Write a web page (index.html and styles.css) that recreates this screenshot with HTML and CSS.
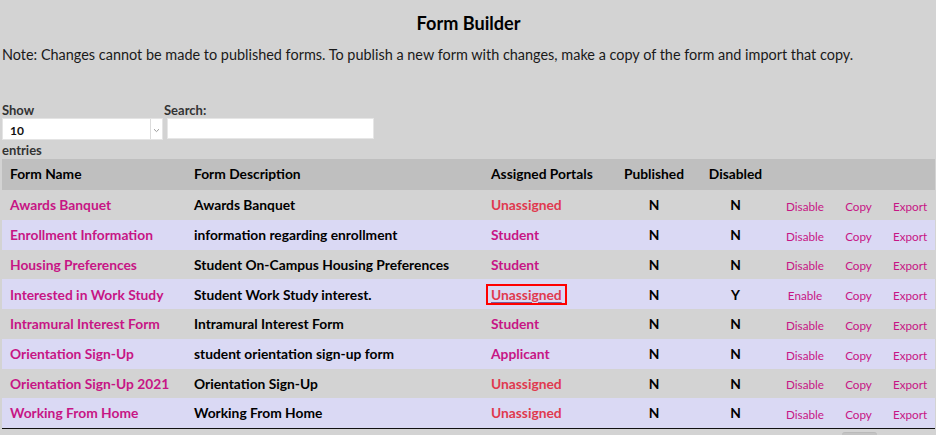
FILE: index.html
```html
<!DOCTYPE html>
<html lang="en">
<head>
<meta charset="utf-8">
<title>Form Builder</title>
<link rel="stylesheet" href="styles.css">
</head>
<body>
<h1 class="title">Form Builder</h1>
<p class="note">Note: Changes cannot be made to published forms. To publish a new form with changes, make a copy of the form and import that copy.</p>

<div class="controls">
  <div class="length">
    <label class="lbl">Show</label>
    <div class="select">
      <span class="select-val">10</span>
      <span class="select-arrow">
        <svg width="7" height="5" viewBox="0 0 7 5"><path d="M1 1.2 L3.5 3.6 L6 1.2" fill="none" stroke="#9a9a9a" stroke-width="1"/></svg>
      </span>
    </div>
    <div class="lbl entries">entries</div>
  </div>
  <div class="filter">
    <label class="lbl">Search:</label>
    <div class="search"></div>
  </div>
</div>

<table class="grid">
  <colgroup>
    <col class="c-name"><col class="c-desc"><col class="c-portal"><col class="c-pub"><col class="c-dis"><col class="c-act1"><col class="c-act2"><col class="c-act3">
  </colgroup>
  <thead>
    <tr>
      <th>Form Name</th><th>Form Description</th><th>Assigned Portals</th><th class="ctr">Published</th><th class="ctr">Disabled</th><th></th><th></th><th></th>
    </tr>
  </thead>
  <tbody>
    <tr>
      <td><a class="lnk">Awards Banquet</a></td><td>Awards Banquet</td><td><a class="un">Unassigned</a></td><td class="ctr">N</td><td class="ctr">N</td><td class="act"><a>Disable</a></td><td class="act"><a>Copy</a></td><td class="act"><a>Export</a></td>
    </tr>
    <tr>
      <td><a class="lnk">Enrollment Information</a></td><td>information regarding enrollment</td><td><a class="lnk">Student</a></td><td class="ctr">N</td><td class="ctr">N</td><td class="act"><a>Disable</a></td><td class="act"><a>Copy</a></td><td class="act"><a>Export</a></td>
    </tr>
    <tr>
      <td><a class="lnk">Housing Preferences</a></td><td>Student On-Campus Housing Preferences</td><td><a class="lnk">Student</a></td><td class="ctr">N</td><td class="ctr">N</td><td class="act"><a>Disable</a></td><td class="act"><a>Copy</a></td><td class="act"><a>Export</a></td>
    </tr>
    <tr>
      <td><a class="lnk">Interested in Work Study</a></td><td>Student Work Study interest.</td><td><a class="un focus">Unassigned</a></td><td class="ctr">N</td><td class="ctr">Y</td><td class="act"><a>Enable</a></td><td class="act"><a>Copy</a></td><td class="act"><a>Export</a></td>
    </tr>
    <tr>
      <td><a class="lnk">Intramural Interest Form</a></td><td>Intramural Interest Form</td><td><a class="lnk">Student</a></td><td class="ctr">N</td><td class="ctr">N</td><td class="act"><a>Disable</a></td><td class="act"><a>Copy</a></td><td class="act"><a>Export</a></td>
    </tr>
    <tr>
      <td><a class="lnk">Orientation Sign-Up</a></td><td>student orientation sign-up form</td><td><a class="lnk">Applicant</a></td><td class="ctr">N</td><td class="ctr">N</td><td class="act"><a>Disable</a></td><td class="act"><a>Copy</a></td><td class="act"><a>Export</a></td>
    </tr>
    <tr>
      <td><a class="lnk">Orientation Sign-Up 2021</a></td><td>Orientation Sign-Up</td><td><a class="un">Unassigned</a></td><td class="ctr">N</td><td class="ctr">N</td><td class="act"><a>Disable</a></td><td class="act"><a>Copy</a></td><td class="act"><a>Export</a></td>
    </tr>
    <tr>
      <td><a class="lnk">Working From Home</a></td><td>Working From Home</td><td><a class="un">Unassigned</a></td><td class="ctr">N</td><td class="ctr">N</td><td class="act"><a>Disable</a></td><td class="act"><a>Copy</a></td><td class="act"><a>Export</a></td>
    </tr>
  </tbody>
</table>

<div class="paging"><span class="pbtn"></span></div>
</body>
</html>
```
FILE: styles.css
```css
html, body {
  margin: 0;
  background: #d3d3d3;
}
body {
  padding: 0 1px 0 2px;
  font-family: Lato, "Open Sans", sans-serif;
  color: #000;
  overflow: hidden;
}
.title {
  margin: 12px 0 0;
  font-size: 18.1px;
  line-height: 22px;
  font-weight: 700;
  text-align: center;
}
.note {
  margin: 12px 0 0;
  font-size: 14.45px;
  line-height: 18px;
  color: #1a1a1a;
  white-space: nowrap;
}
.controls {
  display: flex;
  margin-top: 38px;
}
.length {
  width: 162px;
}
.lbl {
  display: block;
  font-size: 13px;
  line-height: 16px;
  font-weight: 700;
  color: #333;
}
.lbl.entries {
  margin-top: 2px;
}
.select {
  display: flex;
  width: 161px;
  height: 22px;
  box-sizing: border-box;
  background: #fff;
  border: 1px solid #e4e4e4;
}
.select-val {
  flex: 1;
  padding: 4px 0 0 7px;
  font-size: 12px;
  line-height: 16px;
  font-weight: 700;
  color: #111;
}
.select-arrow {
  width: 11px;
  border-left: 1px solid #dcdcdc;
  display: flex;
  align-items: center;
  justify-content: center;
  padding-top: 2px;
}
.search {
  margin-left: 3px;
  width: 207px;
  height: 21px;
  box-sizing: border-box;
  background: #fff;
  border: 1px solid #e6e6e6;
}
.grid {
  margin-top: 1px;
  width: 933px;
  table-layout: fixed;
  border-collapse: collapse;
  border-bottom: 1px solid #111;
  font-size: 13.8px;
  font-weight: 700;
}
.c-name { width: 184px; }
.c-desc { width: 297px; }
.c-portal { width: 132px; }
.c-pub { width: 78px; }
.c-dis { width: 85px; }
.c-act1 { width: 54px; }
.c-act2 { width: 53px; }
.c-act3 { width: 50px; }
.grid th, .grid td {
  padding: 0 8px;
  text-align: left;
  white-space: nowrap;
  line-height: 17px;
  vertical-align: middle;
}
.grid thead th {
  background: #bfbfbf;
  height: 31px;
  box-sizing: border-box;
  padding-bottom: 1.5px;
}
.grid tbody td {
  height: 29.75px;
  box-sizing: border-box;
}
.grid tbody tr:nth-child(even) td {
  background: #dad9f4;
}
.grid .ctr {
  text-align: center;
}
.lnk {
  color: #c71585;
}
.un {
  color: #e0394f;
}
.focus {
  text-decoration: underline;
  text-decoration-color: #7b5b9e;
  text-underline-offset: 2px;
  outline: 2px solid #ff0000;
  padding: 0 3px;
  margin: 0 -3px;
}
.grid td.act {
  text-align: center;
  padding: 3px 0 0;
  font-size: 11.7px;
  font-weight: 400;
}
.act a {
  color: #c71585;
}
.paging {
  display: flex;
  justify-content: flex-end;
  padding-right: 58px;
  margin-top: 3px;
}
.pbtn {
  width: 35px;
  height: 20px;
  background: #c4c4c4;
  border-top: 1px solid #bababa;
  border-radius: 3px 3px 0 0;
}
```
